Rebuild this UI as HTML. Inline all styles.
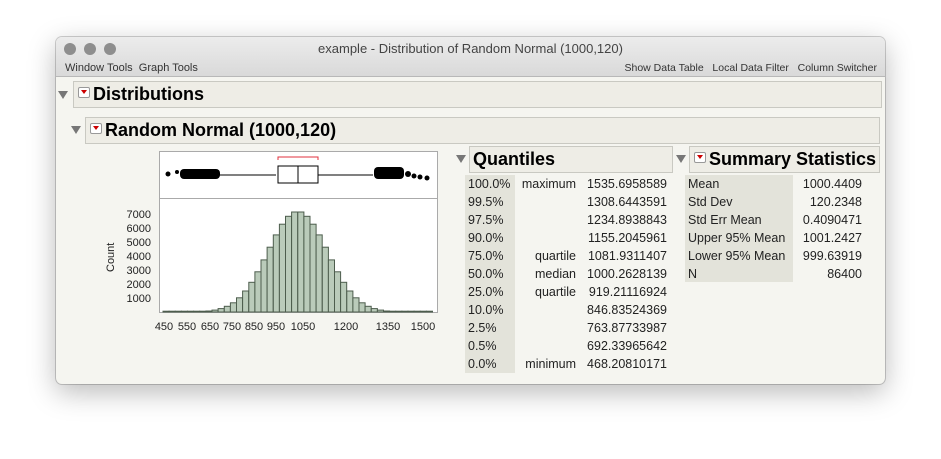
<!DOCTYPE html>
<html><head><style>
body{margin:0;width:941px;height:459px;background:#fff;font-family:"Liberation Sans",sans-serif;position:relative;overflow:hidden}
.win{position:absolute;left:56px;top:37px;width:829px;height:347px;border-radius:6px;background:#f5f5f0;box-shadow:0 8px 28px rgba(0,0,0,.28),0 0 0 1px rgba(0,0,0,.18);overflow:hidden}
.tb{position:absolute;left:0;top:0;width:829px;height:39px;background:linear-gradient(#ececec,#d9d9d9);border-bottom:1px solid #b8b8b8}
.dot{position:absolute;top:6px;width:12px;height:12px;border-radius:50%;background:#8e8e8e}
.t{position:absolute;white-space:nowrap;color:#222}
.hdr{position:absolute;box-sizing:border-box;background:#eeede6;border:1px solid #c9c9c2;font-weight:bold;font-size:18px;color:#000}
.tri{position:absolute;width:0;height:0;border-left:5px solid transparent;border-right:5px solid transparent;border-top:8px solid #777}
.rb{display:inline-block;width:10px;height:9px;border:1px solid #999;background:#fff;border-radius:2px;position:relative;vertical-align:2px;margin-right:3px}
.rb:after{content:"";position:absolute;left:2px;top:2px;border-left:3px solid transparent;border-right:3px solid transparent;border-top:4px solid #c00}
.s{font-size:12.5px;color:#222}
</style></head><body>
<div class="win">
<div class="tb">
<div class="dot" style="left:8px"></div><div class="dot" style="left:28px"></div><div class="dot" style="left:48px"></div>
<div class="t" style="left:0;width:829px;text-align:center;top:4px;font-size:13px;color:#444">example - Distribution of Random Normal (1000,120)</div>
<div class="t" style="left:9px;top:25px;font-size:11px;color:#333">Window Tools &nbsp;Graph Tools</div>
<div class="t" style="right:8px;top:25px;font-size:10.5px;color:#333">Show Data Table &nbsp;&nbsp;Local Data Filter &nbsp;&nbsp;Column Switcher</div>
</div>
</div>
<div class="tri" style="left:58px;top:91px"></div>
<div class="hdr" style="left:73px;top:81px;width:809px;height:27px;line-height:25px;padding-left:4px"><span class="rb"></span>Distributions</div>
<div class="tri" style="left:71px;top:126px"></div>
<div class="hdr" style="left:85px;top:117px;width:795px;height:27px;line-height:25px;padding-left:4px"><span class="rb"></span>Random Normal (1000,120)</div>

<svg style="position:absolute;left:0;top:0" width="941" height="459">
<rect x="159.5" y="151.5" width="278" height="161" fill="#fff" stroke="#aaa"/>
<line x1="159" y1="198.5" x2="437" y2="198.5" stroke="#aaa"/>
<path d="M278 160v-3h40v3" fill="none" stroke="#e0303c"/>
<line x1="213" y1="175" x2="276" y2="175" stroke="#000"/>
<line x1="318" y1="175" x2="373" y2="175" stroke="#000"/>
<rect x="278" y="166" width="40" height="17" fill="#fff" stroke="#000"/>
<line x1="298" y1="166" x2="298" y2="183" stroke="#000"/>
<circle cx="168" cy="174" r="2.5"/>
<rect x="180" y="169" width="40" height="10" rx="4"/>
<rect x="374" y="167" width="30" height="12" rx="4"/>
<circle cx="408" cy="174" r="3"/><circle cx="414" cy="176" r="2.5"/><circle cx="420" cy="177" r="2.5"/><circle cx="427" cy="178" r="2.5"/><circle cx="177" cy="172" r="2"/>
<g id="bars" fill="#bacbba" stroke="#4d5d4d" stroke-width="1"></g>
<g font-size="11" fill="#222" text-anchor="end" font-family="Liberation Sans">
<text x="151" y="218">7000</text><text x="151" y="232">6000</text><text x="151" y="246">5000</text><text x="151" y="260">4000</text><text x="151" y="274">3000</text><text x="151" y="288">2000</text><text x="151" y="302">1000</text>
</g>
<text x="0" y="0" font-size="11" fill="#222" transform="translate(114 272) rotate(-90)" font-family="Liberation Sans">Count</text>
<g font-size="11" fill="#222" text-anchor="middle" font-family="Liberation Sans">
<text x="164" y="330">450</text><text x="187" y="330">550</text><text x="210" y="330">650</text><text x="232" y="330">750</text><text x="254" y="330">850</text><text x="276" y="330">950</text><text x="303" y="330">1050</text><text x="346" y="330">1200</text><text x="388" y="330">1350</text><text x="423" y="330">1500</text>
</g>
</svg>

<div class="tri" style="left:456px;top:155px"></div>
<div class="hdr" style="left:469px;top:146px;width:204px;height:27px;line-height:25px;padding-left:3px">Quantiles</div>
<div class="tri" style="left:676px;top:155px"></div>
<div class="hdr" style="left:689px;top:146px;width:191px;height:27px;line-height:25px;padding-left:4px"><span class="rb"></span>Summary Statistics</div>
<div style="position:absolute;left:465px;top:175px;width:50px;height:198px;background:#e3e3da"></div>
<div style="position:absolute;left:685px;top:175px;width:108px;height:107px;background:#e3e3da"></div>
<div id="q" class="s"></div>
<script>
var q=[["100.0%","maximum","1535.6958589"],["99.5%","","1308.6443591"],["97.5%","","1234.8938843"],["90.0%","","1155.2045961"],["75.0%","quartile","1081.9311407"],["50.0%","median","1000.2628139"],["25.0%","quartile","919.21116924"],["10.0%","","846.83524369"],["2.5%","","763.87733987"],["0.5%","","692.33965642"],["0.0%","minimum","468.20810171"]];
var h="";q.forEach(function(r,i){var y=177+i*18;h+='<div class="t s" style="left:468px;top:'+y+'px">'+r[0]+'</div><div class="t s" style="right:365px;top:'+y+'px">'+r[1]+'</div><div class="t s" style="right:274px;top:'+y+'px">'+r[2]+'</div>';});
var s=[["Mean","1000.4409"],["Std Dev","120.2348"],["Std Err Mean","0.4090471"],["Upper 95% Mean","1001.2427"],["Lower 95% Mean","999.63919"],["N","86400"]];
s.forEach(function(r,i){var y=177+i*18;h+='<div class="t s" style="left:688px;top:'+y+'px">'+r[0]+'</div><div class="t s" style="right:79px;top:'+y+'px">'+r[1]+'</div>';});
document.getElementById("q").innerHTML=h;
var g=document.getElementById("bars"),b="";
for(var v=450;v<1550;v+=25){var c=v+12.5,n=86400*25/(120*2.5066)*Math.exp(-Math.pow((c-1000)/120,2)/2),hh=n*0.014;if(hh<0.8)hh=0.8;var x=163+(v-450)*0.245;b+='<rect x="'+x.toFixed(1)+'" y="'+(312-hh).toFixed(1)+'" width="6.1" height="'+hh.toFixed(1)+'"/>';}
g.innerHTML=b;
</script>
</body></html>
